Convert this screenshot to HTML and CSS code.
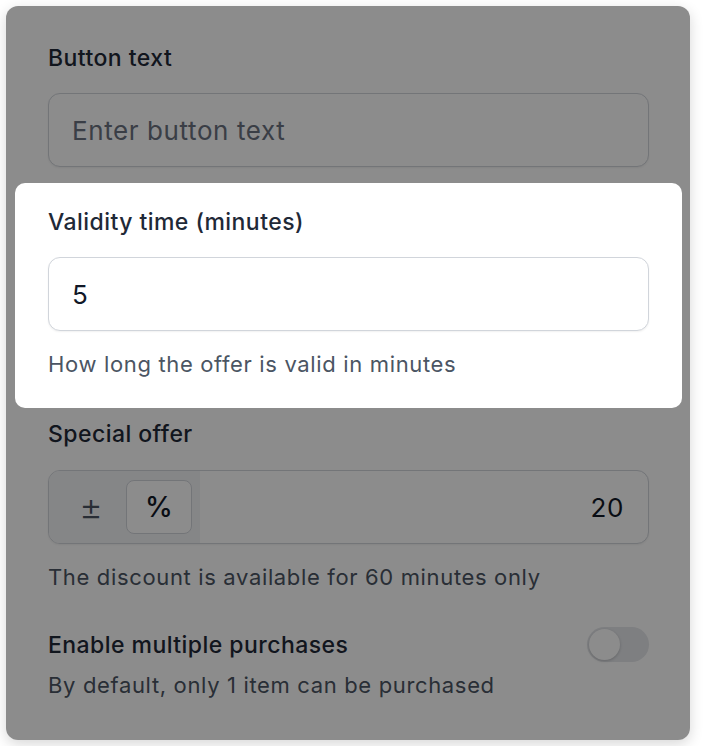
FILE: index.html
```html
<!DOCTYPE html>
<html lang="en">
<head>
  <meta charset="UTF-8">
  <meta name="viewport" content="width=device-width, initial-scale=1.0">
  <title>Offer settings</title>
  <link rel="stylesheet" href="styles.css">
</head>
<body>
  <div class="card">
    <div class="field">
      <label class="label" for="buttonText">Button text</label>
      <input class="text-input" id="buttonText" type="text" placeholder="Enter button text">
    </div>

    <div class="field field-spotlight">
      <label class="label" for="validity">Validity time (minutes)</label>
      <input class="text-input" id="validity" type="text" value="5">
      <p class="hint">How long the offer is valid in minutes</p>
    </div>

    <div class="field">
      <label class="label" for="discount">Special offer</label>
      <div class="combo">
        <div class="combo-types">
          <button class="type-btn type-sign">±</button>
          <button class="type-btn active">%</button>
        </div>
        <input class="combo-input" id="discount" type="text" value="20">
      </div>
      <p class="hint">The discount is available for 60 minutes only</p>
    </div>

    <div class="field field-toggle">
      <div class="toggle-row">
        <span class="label">Enable multiple purchases</span>
        <span class="switch"><span class="knob"></span></span>
      </div>
      <p class="hint hint-tight">By default, only 1 item can be purchased</p>
    </div>

    <div class="overlay"></div>
  </div>
</body>
</html>
```

FILE: styles.css
```css
body {
  margin: 0;
  padding: 6px;
  background: #fff;
  font-family: Inter, "Noto Sans", sans-serif;
  color: #1f2937;
}
.card {
  position: relative;
  width: 684px;
  box-sizing: border-box;
  padding: 36px 41px 40px 42px;
  background: #fff;
  border-radius: 12px;
  box-shadow: 0 4px 14px rgba(0, 0, 0, 0.16);
  display: flex;
  flex-direction: column;
  gap: 39px;
}
.overlay {
  position: absolute;
  inset: 0;
  background: rgba(0, 0, 0, 0.45);
  border-radius: inherit;
  z-index: 1;
}
.field {
  display: flex;
  flex-direction: column;
}
.field-spotlight {
  position: relative;
  z-index: 2;
  background: #fff;
  border-radius: 10px;
  margin: -23px -33px -29px;
  padding: 23px 33px 29px;
}
.field-toggle {
  margin-top: -4px;
}
.label {
  display: block;
  font-size: 23px;
  line-height: 32px;
  font-weight: 500;
  letter-spacing: 0.45px;
  color: #1f2937;
  margin-bottom: 19px;
}
.text-input {
  height: 74px;
  box-sizing: border-box;
  padding: 0 23px;
  border: 1px solid #d1d5db;
  border-radius: 12px;
  box-shadow: 0 1px 2px rgba(0, 0, 0, 0.06);
  font-family: inherit;
  font-size: 26px;
  letter-spacing: 0.6px;
  color: #111827;
  background: #fff;
  outline: none;
}
.text-input::placeholder {
  color: #6b7280;
}
.hint {
  margin: 18px 0 0;
  font-size: 22px;
  line-height: 30px;
  letter-spacing: 0.65px;
  color: #4b5563;
}
.hint-tight {
  margin-top: 8px;
}
.combo {
  display: flex;
  height: 74px;
  margin-top: 1px;
  box-sizing: border-box;
  border: 1px solid #d1d5db;
  border-radius: 12px;
  box-shadow: 0 1px 2px rgba(0, 0, 0, 0.06);
  overflow: hidden;
  background: #fff;
}
.combo-types {
  display: flex;
  gap: 2px;
  padding: 9px 8px 9px 9px;
  background: #f3f4f6;
}
.type-btn {
  width: 66px;
  border: 1px solid transparent;
  border-radius: 8px;
  background: transparent;
  font-family: inherit;
  font-size: 28px;
  color: #4b5563;
  padding: 0;
}
.type-sign {
  font-size: 36px;
  font-weight: 300;
}
.type-btn.active {
  background: #fff;
  border-color: #d1d5db;
  color: #111827;
  font-weight: 500;
}
.combo-input {
  flex: 1;
  min-width: 0;
  border: none;
  outline: none;
  padding: 0 24px;
  text-align: right;
  font-family: inherit;
  font-size: 26px;
  letter-spacing: 0.6px;
  color: #111827;
  background: transparent;
}
.toggle-row {
  display: flex;
  align-items: center;
  justify-content: space-between;
}
.toggle-row .label {
  margin-bottom: 0;
}
.switch {
  width: 62px;
  height: 35px;
  box-sizing: border-box;
  padding: 2px;
  border-radius: 18px;
  background: #e5e7eb;
  display: flex;
  align-items: center;
}
.knob {
  width: 31px;
  height: 31px;
  border-radius: 50%;
  background: #fff;
  box-shadow: 0 1px 3px rgba(0, 0, 0, 0.2);
}
```
